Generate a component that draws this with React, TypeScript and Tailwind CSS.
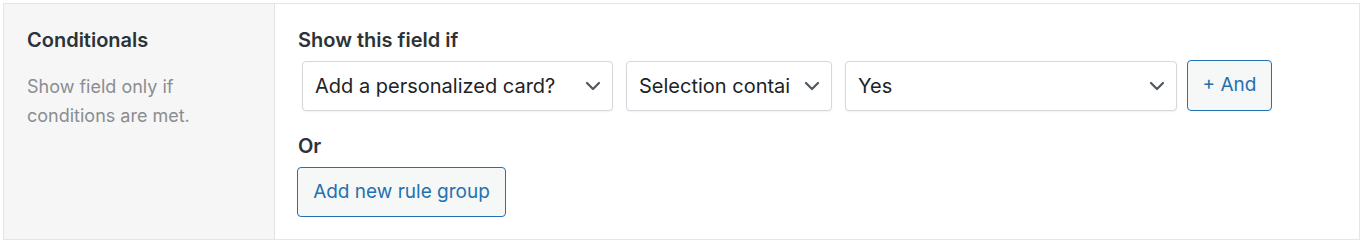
import React from "react";

function Chevron() {
  return (
    <svg width="16" height="10" viewBox="0 0 16 10" fill="none" className="ml-[8px] shrink-0">
      <path d="M2 2 L8 8 L14 2" stroke="#50575e" strokeWidth="2.2" strokeLinecap="round" strokeLinejoin="round" />
    </svg>
  );
}

function Select({ label, className }: { label: string; className: string }) {
  return (
    <div
      className={`flex h-[50px] items-center justify-between rounded-[4px] border border-[#d6d6dc] bg-white pl-[12px] pr-[11px] shadow-[0_1px_2px_rgba(0,0,0,0.06)] ${className}`}
    >
      <span className="min-w-0 flex-1 whitespace-nowrap text-[20px] text-[#1d2327]">{label}</span>
      <Chevron />
    </div>
  );
}

export default function App() {
  return (
    <div className="h-[245px] w-[1364px] bg-white pl-[3px] pt-[3px]" style={{ fontFamily: "Inter, 'Noto Sans', sans-serif" }}>
      <div className="flex h-[237px] w-[1357px] border-y border-l border-r border-[#e6e6e8]">
        <div className="w-[271px] shrink-0 border-r border-[#e2e2e4] bg-[#f6f6f6] pl-[23px] pt-[22px]">
          <div className="text-[20px] font-semibold leading-[28px] text-[#2c3338]">Conditionals</div>
          <div className="mt-[18px] text-[18px] leading-[29px] text-[#8a8d91]">
            Show field only if
            <br />
            conditions are met.
          </div>
        </div>
        <div className="flex-1 pl-[23px] pt-[22px]">
          <div className="text-[20px] font-semibold leading-[28px] text-[#2c3338]">Show this field if</div>
          <div className="mt-[6px] flex items-center">
            <Select label="Add a personalized card?" className="ml-[4px] w-[311px]" />
            <Select label="Selection contai" className="ml-[13px] w-[206px]" />
            <Select label="Yes" className="ml-[13px] w-[332px]" />
            <button className="ml-[10px] h-[51px] w-[85px] rounded-[4px] border border-[#2271b1] bg-[#f6f7f7] text-[19px] text-[#2271b1]">
              + And
            </button>
          </div>
          <div className="mt-[21px] text-[20px] font-semibold leading-[28px] text-[#2c3338]">Or</div>
          <button className="mt-[7px] h-[50px] w-[209px] -ml-[1px] rounded-[4px] border border-[#2271b1] bg-[#f6f7f7] text-[19px] text-[#2271b1]">
            Add new rule group
          </button>
        </div>
      </div>
    </div>
  );
}
